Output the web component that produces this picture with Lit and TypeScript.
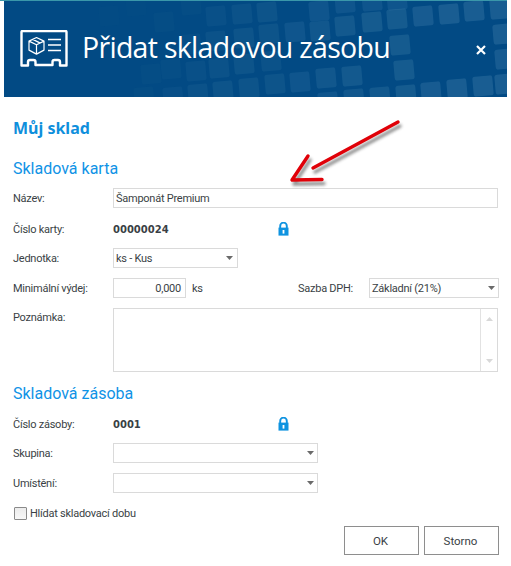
import { LitElement, html, css, svg } from "lit";
import { customElement } from "lit/decorators.js";

const SQUARES: [number, number, number][] = [
  [103,7,.05],[130,-3,.05],[158,13,.1],[185,-4,.1],[210,7,.2],[236,5,.25],
  [261,3,.3],[313,2,.35],[339,-6,.35],[366,-8,.35],[391,-9,.35],
  [185,35,.15],[210,32,.25],[238,29,.3],[263,25,.3],[289,23,.35],[314,22,.4],[339,17,.45],[366,13,.5],[391,10,.5],[417,7,.55],[443,5,.6],[468,2,.6],[494,0,.6],
  [394,36,.5],[497,25,.6],[499,50,.55],
  [145,65,.1],[165,60,.12],[190,62,.2],[213,59,.25],[238,55,.3],[265,52,.25],[398,61,.5],
  [269,75,.3],[294,73,.35],[320,69,.4],[346,67,.45],[499,75,.6],
  [138,88,.1],[167,88,.18],[192,85,.25],[217,82,.3],[243,79,.3],[322,93,.35],[348,90,.4],[374,88,.45],[400,86,.5],[425,83,.55],[451,80,.6],[477,77,.6],
];

const tiles = () => svg`${SQUARES.map(([x, y, o]) => svg`<rect x=${x - 4} y=${y - 1} width="20" height="20" rx="2.5" fill="#7fb2cf" opacity=${o * 0.32} transform="rotate(-5 ${x + 6} ${y + 9})"></rect>`)}`;

const caret = html`<svg class="caret" width="7" height="4" viewBox="0 0 7 4"><path d="M0 0h7L3.5 4z" fill="#6a6a6a"></path></svg>`;

const lock = html`<svg class="lock" width="11" height="14" viewBox="0 0 11 14">
  <path d="M2.2 6V3.9a3.3 3.3 0 0 1 6.6 0V6" fill="none" stroke="#0f93e0" stroke-width="1.9"></path>
  <rect x="0.5" y="5.6" width="10" height="8" fill="#0f93e0"></rect>
  <rect x="4.6" y="8" width="1.8" height="3.6" fill="#fff"></rect>
</svg>`;

@customElement("app-root")
export class AppRoot extends LitElement {
  static styles = css`
    :host { display: block; position: relative; width: 511px; height: 566px; overflow: hidden; background: #fff;
      font-family: "Roboto", sans-serif; font-size: 11px; letter-spacing: -0.25px; color: #3a3f45; }
    .stripe { height: 1px; width: 507px; background: #3a97aa; }
    .header { position: relative; margin-left: 4px; width: 503px; height: 96px; background: #024a84; overflow: hidden;
      display: flex; align-items: center; box-sizing: border-box; padding-left: 16px; }
    .tiles { position: absolute; left: -4px; top: -1px; }
    .logo { position: relative; flex: none; margin-top: -1px; }
    .title { position: relative; margin-left: 14px; font-family: "Open Sans", sans-serif; font-size: 28.5px; letter-spacing: -0.7px; color: #fff; line-height: 40px; margin-top: -4px; white-space: nowrap; }
    .close { position: absolute; left: 471px; top: 43px; }
    .form { padding: 21px 12px 0 13px; display: flex; flex-direction: column; }
    .store { font-family: "Noto Sans", sans-serif; font-size: 16px; letter-spacing: 0; font-weight: 700; color: #0f8fdc; height: 20px; line-height: 20px; }
    .section { font-family: "Roboto", sans-serif; font-size: 16px; letter-spacing: 0; color: #0f93e6; height: 20px; line-height: 22px; }
    .s1 { margin-top: 20px; }
    .s2 { margin-top: 11px; }
    .row { display: flex; align-items: center; height: 20px; margin-top: 10px; }
    .row.tall { height: 64px; align-items: flex-start; }
    .row.tall .label { padding-top: 3px; }
    .row.after-value { margin-top: 9px; }
    .row.value { margin-top: 11px; }
    .label { width: 100px; flex: none; white-space: nowrap; }
    .box { box-sizing: border-box; border: 1px solid #dadada; background: #fff; height: 20px; display: flex; align-items: center; padding: 0 3px 0 2px; flex: none; color: #3a3f45; }
    .grow { flex: 1; margin-right: 1px; }
    .caret { margin-left: auto; }
    .w125 { width: 125px; padding-right: 4px; }
    .w205 { width: 205px; }
    .w130 { width: 130px; }
    .num { width: 73px; justify-content: flex-end; padding-right: 4px; }
    .unit { margin-left: 6px; width: 106px; flex: none; }
    .dph { width: 71px; flex: none; }
    .strong { font-family: "DejaVu Sans", sans-serif; font-size: 10px; letter-spacing: 0; font-weight: 700; width: 165px; flex: none; }
    .lock { flex: none; }
    .memo { box-sizing: border-box; flex: 1; margin-right: 1px; height: 64px; border: 1px solid #dadada; display: flex; justify-content: flex-end; }
    .scroll { box-sizing: border-box; width: 17px; border-left: 1px solid #e2e2e2; display: flex; flex-direction: column; justify-content: space-between; align-items: center; padding: 8px 0; }
    .check { display: flex; align-items: center; height: 20px; margin-top: 10px; padding-left: 1px; }
    .cb { box-sizing: border-box; width: 13px; height: 13px; border: 1px solid #8a8a8a; border-radius: 1px; background: linear-gradient(#ececec, #f8f8f8); margin-right: 3px; }
    .actions { display: flex; justify-content: flex-end; gap: 5px; margin-top: 3px; }
    .btn { box-sizing: border-box; width: 75px; height: 29px; border: 1px solid #8e8e8e; background: #fff; display: flex; align-items: center; justify-content: center; font-size: 11.5px; letter-spacing: 0; color: #3a3f45; padding-right: 2px; }
    .arrow { position: absolute; left: 280px; top: 110px; }
  `;

  render() {
    return html`
      <div class="stripe"></div>
      <div class="header">
        <svg class="tiles" width="511" height="97">${tiles()}</svg>
        <svg class="logo" width="48" height="38" viewBox="20 30 48 38" fill="none" stroke="#fff">
          <path d="M22.500 31h43a1 1 0 0 1 1 1v33.500h-6.500v-3.500a2 2 0 0 0-2-2h-3.500a2 2 0 0 0-2 2v3h-17v-3a2 2 0 0 0-2-2h-3.500a2 2 0 0 0-2 2v3.500h-6.500V32a1 1 0 0 1 1-1z" stroke-width="2.4" stroke-linejoin="round"></path>
          <path d="M36.500 37.500l7.500 3.600v9l-7.500 4-7.500-4v-9z M29 41.100l7.500 3.600 7.500-3.600 M36.500 44.700v9.400 M32.800 39.400l7.500 3.700" stroke-width="1.2" stroke-linejoin="round"></path>
          <path d="M48 39.500h13 M48 45h13 M48 50.500h13" stroke-width="1.7"></path>
        </svg>
        <div class="title">Přidat skladovou zásobu</div>
        <svg class="close" width="12" height="12" viewBox="0 0 12 12"><path d="M2 2l8 8M10 2l-8 8" stroke="#fff" stroke-width="2.2"></path></svg>
      </div>
      <div class="form">
        <div class="store">Můj sklad</div>
        <div class="section s1">Skladová karta</div>
        <div class="row">
          <div class="label">Název:</div>
          <div class="box grow">Šamponát Premium</div>
        </div>
        <div class="row value">
          <div class="label">Číslo karty:</div>
          <div class="strong">00000024</div>
          ${lock}
        </div>
        <div class="row after-value">
          <div class="label">Jednotka:</div>
          <div class="box w125">ks - Kus ${caret}</div>
        </div>
        <div class="row">
          <div class="label">Minimální výdej:</div>
          <div class="box num">0,000</div>
          <div class="unit">ks</div>
          <div class="dph">Sazba DPH:</div>
          <div class="box w130">Základní (21%) ${caret}</div>
        </div>
        <div class="row tall">
          <div class="label">Poznámka:</div>
          <div class="memo">
            <div class="scroll">
              <svg width="7" height="4" viewBox="0 0 7 4"><path d="M3.500 0L7 4H0z" fill="#d8d8d8"></path></svg>
              <svg width="7" height="4" viewBox="0 0 7 4"><path d="M0 0h7L3.500 4z" fill="#d8d8d8"></path></svg>
            </div>
          </div>
        </div>
        <div class="section s2">Skladová zásoba</div>
        <div class="row value">
          <div class="label">Číslo zásoby:</div>
          <div class="strong">0001</div>
          ${lock}
        </div>
        <div class="row after-value">
          <div class="label">Skupina:</div>
          <div class="box w205">${caret}</div>
        </div>
        <div class="row">
          <div class="label">Umístění:</div>
          <div class="box w205">${caret}</div>
        </div>
        <div class="check"><span class="cb"></span>Hlídat skladovací dobu</div>
        <div class="actions">
          <div class="btn">OK</div>
          <div class="btn">Storno</div>
        </div>
      </div>
      <svg class="arrow" width="130" height="80" viewBox="280 110 130 80">
        <defs><filter id="blur" x="-20%" y="-20%" width="140%" height="140%"><feGaussianBlur stdDeviation="1.8"></feGaussianBlur></filter></defs>
        <g fill="none" stroke-linecap="round" stroke-linejoin="round" stroke-width="3.4">
          <g stroke="#555" opacity=".65" filter="url(#blur)" transform="translate(2 4)">
            <path d="M398 122L313 168"></path><path d="M308 156L292 180L322 179.500"></path>
          </g>
          <g stroke="#e00008">
            <path d="M398 122L313 168"></path><path d="M308 156L292 180L322 179.500"></path>
          </g>
        </g>
      </svg>
    `;
  }
}
